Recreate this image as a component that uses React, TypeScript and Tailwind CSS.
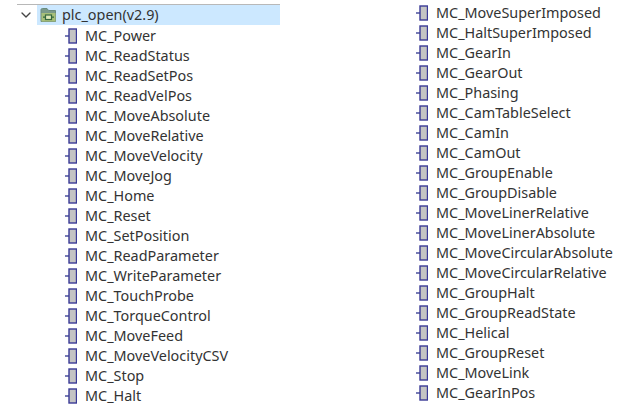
import { ChevronDown } from "lucide-react";

const LEFT = [
  "MC_Power", "MC_ReadStatus", "MC_ReadSetPos", "MC_ReadVelPos", "MC_MoveAbsolute", "MC_MoveRelative",
  "MC_MoveVelocity", "MC_MoveJog", "MC_Home", "MC_Reset", "MC_SetPosition", "MC_ReadParameter",
  "MC_WriteParameter", "MC_TouchProbe", "MC_TorqueControl", "MC_MoveFeed", "MC_MoveVelocityCSV", "MC_Stop", "MC_Halt",
];

const RIGHT = [
  "MC_MoveSuperImposed", "MC_HaltSuperImposed", "MC_GearIn", "MC_GearOut", "MC_Phasing", "MC_CamTableSelect",
  "MC_CamIn", "MC_CamOut", "MC_GroupEnable", "MC_GroupDisable", "MC_MoveLinerRelative", "MC_MoveLinerAbsolute",
  "MC_MoveCircularAbsolute", "MC_MoveCircularRelative", "MC_GroupHalt", "MC_GroupReadState", "MC_Helical",
  "MC_GroupReset", "MC_MoveLink", "MC_GearInPos",
];

function BlockIcon() {
  return (
    <svg width="12" height="16" viewBox="0 0 12 16" className="shrink-0">
      <path d="M0 8H4" stroke="#4a4f9c" strokeWidth="1.5" fill="none" />
      <rect x="4" y="1" width="7.5" height="14" fill="#c4c4c4" stroke="#3a3a96" strokeWidth="1.4" />
    </svg>
  );
}

function LibraryIcon() {
  return (
    <svg width="17" height="16" viewBox="0 0 17 16" className="shrink-0">
      <path d="M1 3C1 2 1.5 1.5 2.5 1.5H7L8.5 3.5H15.5V14.5H1Z" fill="#7b9a8a" stroke="#6a8a7c" strokeWidth="1" />
      <rect x="1.5" y="6" width="14" height="8.5" fill="#a8c07a" />
      <rect x="5.5" y="8" width="6" height="4.5" fill="#dfe9b8" stroke="#35683f" strokeWidth="1.2" />
      <path d="M3 10.2H5.5M11.5 10.2H14" stroke="#35683f" strokeWidth="1.2" />
    </svg>
  );
}

function Row({ name }: { name: string }) {
  return (
    <div className="flex h-5 items-center gap-2">
      <BlockIcon />
      <span className="text-[14.4px] leading-5 whitespace-nowrap">{name}</span>
    </div>
  );
}

export default function App() {
  return (
    <div className="flex h-[406px] w-[628px] overflow-hidden bg-white font-['Noto_Sans','Open_Sans',sans-serif] text-[#333]">
      <div className="ml-[17px] mt-[4px] w-[263px] shrink-0 border-t border-[#b8b8b8]">
        <div className="flex h-5 items-center">
          <ChevronDown size={16} strokeWidth={2} className="ml-[1px] mr-[3px] shrink-0 text-[#444]" />
          <div className="flex h-5 flex-1 items-center gap-[5px] bg-[#cce8ff] pl-[3px]">
            <LibraryIcon />
            <span className="text-[14.4px] leading-5 whitespace-nowrap">plc_open(v2.9)</span>
          </div>
        </div>
        <div className="pl-[48px] pt-px">
          {LEFT.map((name) => (
            <Row key={name} name={name} />
          ))}
        </div>
      </div>
      <div className="ml-[136px] mt-[3px] shrink-0">
        {RIGHT.map((name) => (
          <Row key={name} name={name} />
        ))}
      </div>
    </div>
  );
}
